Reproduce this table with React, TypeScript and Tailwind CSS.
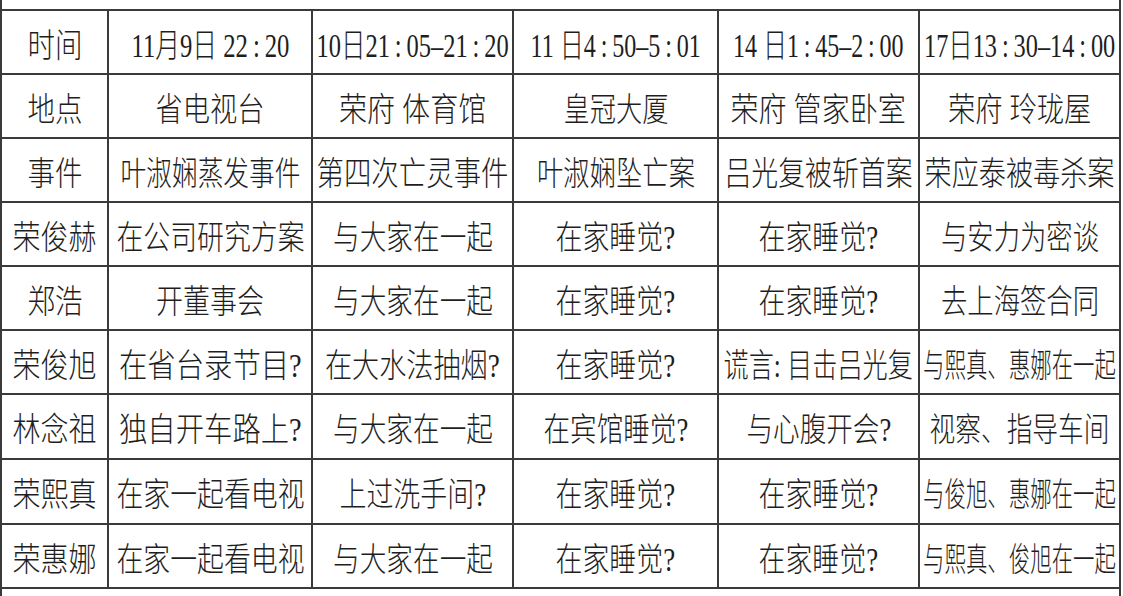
import React, { useLayoutEffect, useRef, useState } from "react";

type Cell = { t: string; w: number };

const rows: Cell[][] = [
  [
    { t: "时间", w: 55 },
    { t: "11月9日 22\u2009:\u200920", w: 158 },
    { t: "10日21\u2009:\u200905–21\u2009:\u200920", w: 192 },
    { t: "11 日4\u2009:\u200950–5\u2009:\u200901", w: 170 },
    { t: "14 日1\u2009:\u200945–2\u2009:\u200900", w: 171 },
    { t: "17日13\u2009:\u200930–14\u2009:\u200900", w: 191 },
  ],
  [
    { t: "地点", w: 55 },
    { t: "省电视台", w: 109 },
    { t: "荣府 体育馆", w: 147 },
    { t: "皇冠大厦", w: 105 },
    { t: "荣府 管家卧室", w: 175 },
    { t: "荣府 玲珑屋", w: 143 },
  ],
  [
    { t: "事件", w: 55 },
    { t: "叶淑娴蒸发事件", w: 180 },
    { t: "第四次亡灵事件", w: 192 },
    { t: "叶淑娴坠亡案", w: 158 },
    { t: "吕光复被斩首案", w: 188 },
    { t: "荣应泰被毒杀案", w: 190 },
  ],
  [
    { t: "荣俊赫", w: 84 },
    { t: "在公司研究方案", w: 188 },
    { t: "与大家在一起", w: 160 },
    { t: "在家睡觉?", w: 120 },
    { t: "在家睡觉?", w: 120 },
    { t: "与安力为密谈", w: 158 },
  ],
  [
    { t: "郑浩", w: 55 },
    { t: "开董事会", w: 108 },
    { t: "与大家在一起", w: 160 },
    { t: "在家睡觉?", w: 120 },
    { t: "在家睡觉?", w: 120 },
    { t: "去上海签合同", w: 158 },
  ],
  [
    { t: "荣俊旭", w: 84 },
    { t: "在省台录节目?", w: 183 },
    { t: "在大水法抽烟?", w: 175 },
    { t: "在家睡觉?", w: 120 },
    { t: "谎言: 目击吕光复", w: 189 },
    { t: "与熙真、惠娜在一起", w: 193 },
  ],
  [
    { t: "林念祖", w: 84 },
    { t: "独自开车路上?", w: 183 },
    { t: "与大家在一起", w: 160 },
    { t: "在宾馆睡觉?", w: 145 },
    { t: "与心腹开会?", w: 145 },
    { t: "视察、指导车间", w: 180 },
  ],
  [
    { t: "荣熙真", w: 84 },
    { t: "在家一起看电视", w: 188 },
    { t: "上过洗手间?", w: 147 },
    { t: "在家睡觉?", w: 120 },
    { t: "在家睡觉?", w: 120 },
    { t: "与俊旭、惠娜在一起", w: 193 },
  ],
  [
    { t: "荣惠娜", w: 84 },
    { t: "在家一起看电视", w: 188 },
    { t: "与大家在一起", w: 160 },
    { t: "在家睡觉?", w: 120 },
    { t: "在家睡觉?", w: 120 },
    { t: "与熙真、俊旭在一起", w: 193 },
  ],
];

function Fit({ text, w }: { text: string; w: number }) {
  const ref = useRef<HTMLSpanElement>(null);
  const [s, setS] = useState(0.85);
  useLayoutEffect(() => {
    const measure = () => {
      const el = ref.current;
      if (el && el.offsetWidth) setS(w / el.offsetWidth);
    };
    measure();
    if (document.fonts && document.fonts.ready) document.fonts.ready.then(measure);
  }, [w, text]);
  return (
    <span
      ref={ref}
      className="inline-block whitespace-pre origin-center leading-none"
      style={{ transform: `scaleX(${s})` }}
    >
      {text}
    </span>
  );
}

export default function App() {
  return (
    <div className="w-[1123px] h-[596px] bg-white overflow-hidden">
      <div className="w-[1121px] h-[596px] border-x-2 border-[#3a3a3a] pt-[9px]">
        <div className="grid grid-cols-[105px_202px_199px_203px_199px_199px] grid-rows-[62px_62px_62px_62px_62px_62px_63px_63px_62px] gap-[2px] bg-[#3a3a3a] border-y-2 border-[#3a3a3a] font-['Liberation_Serif','Noto_Sans_CJK_SC',serif] text-[33px] font-light text-[#1e1e1e]">
          {rows.map((r, i) =>
            r.map((c, j) => (
              <div key={`${i}-${j}`} className="bg-white flex items-center justify-center pt-[8px] overflow-visible">
                <Fit text={c.t} w={c.w} />
              </div>
            ))
          )}
        </div>
      </div>
    </div>
  );
}
